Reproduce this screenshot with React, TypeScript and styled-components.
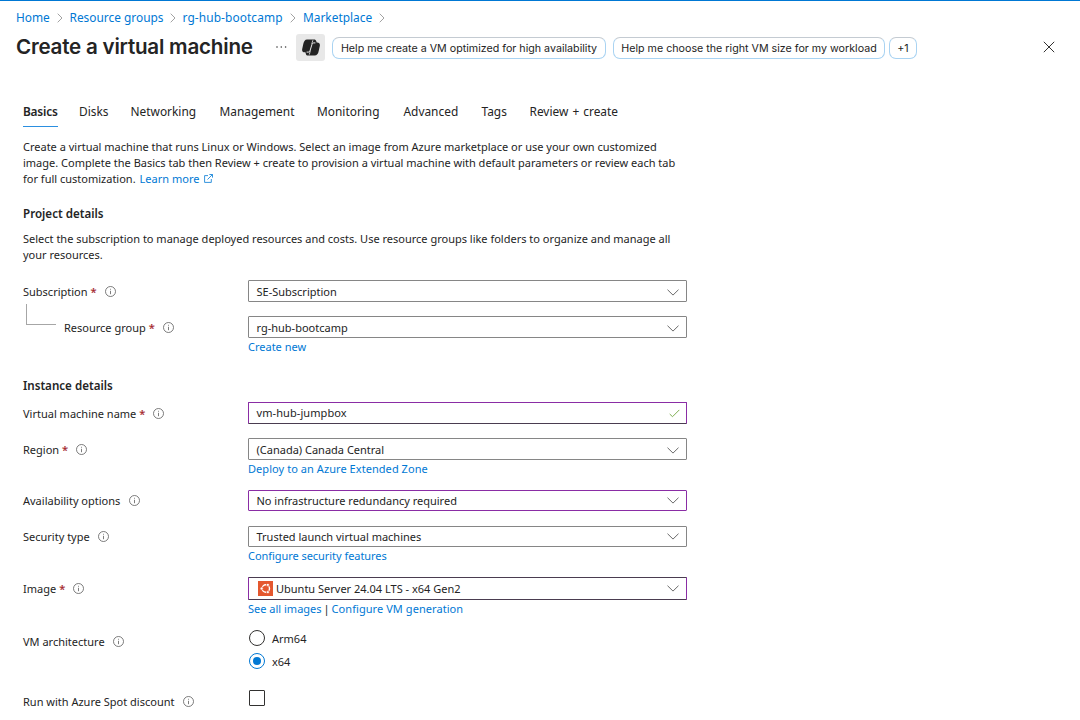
import React from "react";
import styled, { createGlobalStyle, css } from "styled-components";

const ink = "#242424";
const link = "#0078d4";
const purple = "#8a2da5";

const GlobalStyle = createGlobalStyle`
  * { box-sizing: border-box; }
  html, body { margin: 0; background: #fff; overflow: hidden; }
  body {
    font-family: "Noto Sans", "Open Sans", sans-serif;
    font-size: 11px;
    line-height: 16px;
    color: ${ink};
  }
`;

const Page = styled.div`
  width: 1080px;
  height: 720px;
  overflow: hidden;
  border-top: 1px solid ${link};
  background: #fff;
`;

const Link = styled.a<{ $spacing?: number }>`
  color: ${link};
  text-decoration: none;
  white-space: nowrap;
  letter-spacing: ${(p) => p.$spacing ?? 0}px;
`;

const Breadcrumbs = styled.nav`
  display: flex;
  align-items: center;
  height: 16px;
  margin: 9px 0 0 16px;
  font-size: 11.9px;
`;

const Crumb = styled.span<{ $width: number }>`
  display: flex;
  align-items: center;
  justify-content: space-between;
  width: ${(p) => p.$width}px;
  padding-right: 7px;
  a { padding-bottom: 2px; }
  svg { flex: none; }
`;

const Header = styled.header`
  display: flex;
  align-items: center;
  height: 34px;
  margin-top: 4px;
  padding: 0 25px 0 16px;
`;

const Title = styled.h1`
  width: 260px;
  margin: 0;
  font-family: Inter, sans-serif;
  font-size: 20.6px;
  font-weight: 600;
  line-height: 26px;
  letter-spacing: -0.22px;
  white-space: nowrap;
`;

const MoreButton = styled.span`
  display: flex;
  width: 20px;
`;

const CopilotButton = styled.span`
  display: flex;
  align-items: center;
  justify-content: center;
  width: 29px;
  height: 27px;
  border-radius: 3px;
  background: #e8e8e8;
`;

const Pill = styled.span<{ $width: number; $gap: number }>`
  display: flex;
  justify-content: center;
  width: ${(p) => p.$width}px;
  height: 22px;
  margin-left: ${(p) => p.$gap}px;
  margin-top: 2px;
  border: 1px solid #a9d3f2;
  border-top-color: #c4cbd2;
  border-radius: 7px;
  font-family: Inter, sans-serif;
  font-size: 10.7px;
  line-height: 22px;
  white-space: nowrap;
`;

const CloseButton = styled.span`
  display: flex;
  margin-left: auto;
`;

const Tabs = styled.nav`
  display: flex;
  margin: 39px 0 0 23px;
  font-size: 11.9px;
  line-height: 16px;
`;

const Tab = styled.span<{ $width: number; $active?: boolean }>`
  width: ${(p) => p.$width}px;
  height: 24px;
  white-space: nowrap;
  &:last-child { word-spacing: 1px; }
  span { display: inline-block; height: 24px; }
  ${(p) =>
    p.$active &&
    css`
      font-weight: 600;
      letter-spacing: -0.22px;
      span { border-bottom: 1px solid #2b8fe0; }
    `}
`;

const Body = styled.main`
  padding: 12px 0 0 23px;
`;

const Paragraph = styled.p`
  margin: 0;
  white-space: nowrap;
`;

const Line = styled.span`
  display: block;
`;

const LearnMore = styled(Link)`
  margin-left: 4px;
  svg { margin-left: 5px; }
`;

const SectionTitle = styled.h2<{ $top: number; $bottom: number }>`
  margin: ${(p) => p.$top}px 0 ${(p) => p.$bottom}px;
  font-size: 11.6px;
  font-weight: 600;
  line-height: 16px;
`;

const Row = styled.div<{ $height: number; $top?: number }>`
  display: flex;
  height: ${(p) => p.$height}px;
  margin-top: ${(p) => p.$top ?? 0}px;
`;

const LabelCell = styled.div<{ $top: number }>`
  display: flex;
  flex: none;
  align-items: flex-start;
  width: 225px;
  padding-top: ${(p) => p.$top}px;
  white-space: nowrap;
  svg { margin: 2px 0 0 8.5px; }
`;

const Required = styled.span`
  margin: 0 -0.5px 0 3px;
  color: #a4262c;
  -webkit-text-stroke: 0.2px #a4262c;
`;

const Branch = styled.span`
  flex: none;
  width: 30px;
  height: 21px;
  margin: -16px 8px 0 3px;
  border: solid #a6a6a6;
  border-width: 0 0 1px 1px;
`;

const FieldCell = styled.div`
  width: 439px;
`;

const Box = styled.div<{ $height?: number; $tone?: "purple" | "input" | "image" }>`
  display: flex;
  align-items: center;
  height: ${(p) => p.$height ?? 22}px;
  padding: ${(p) => (p.$height || p.$tone ? 0 : 2)}px 7px 0 7.5px;
  border: 1px solid ${(p) => (p.$tone ? purple : "#868686")};
  border-top-color: ${(p) => p.$tone === "image" && "#4a3c50"};
  border-bottom-color: ${(p) => (p.$tone === "image" || p.$tone === "input") && "#4a3c50"};
  border-radius: 1px;
  white-space: nowrap;
  ${(p) => p.$tone === "input" && "padding-right: 6px; letter-spacing: 0.08px;"}
  ${(p) => p.$tone === "image" && "padding-left: 9px;"}
  svg:last-child { margin-left: auto; }
`;

const ImageName = styled.span`
  margin-left: 3px;
`;

const Hint = styled.div`
  padding-top: 1px;
  white-space: nowrap;
`;

const Divider = styled.span`
  margin: 0 2px;
`;

const Option = styled.div<{ $height: number }>`
  display: flex;
  align-items: center;
  height: ${(p) => p.$height}px;
  padding-left: 1px;
`;

const OptionText = styled.span`
  padding: 2px 0 0 7px;
`;

const Radio = styled.span<{ $checked?: boolean }>`
  display: flex;
  align-items: center;
  justify-content: center;
  width: 16px;
  height: 16px;
  border: 1px solid ${(p) => (p.$checked ? link : "#323130")};
  border-radius: 50%;
  &::after {
    content: "";
    width: 8px;
    height: 8px;
    border-radius: 50%;
    background: ${(p) => (p.$checked ? link : "transparent")};
  }
`;

const Checkbox = styled.span`
  display: block;
  width: 16px;
  height: 16px;
  margin: 0 0 0 1px;
  border: 1px solid #323130;
  border-radius: 1px;
`;

const CrumbChevron = () => (
  <svg width="6" height="10" viewBox="0 0 6 10" fill="none" stroke="#8a8a8a" strokeWidth="0.8">
    <path d="M0.7 0.7 5 5 0.7 9.3" />
  </svg>
);

const DownChevron = () => (
  <svg width="12" height="7" viewBox="0 0 12 7" fill="none" stroke="#6a6a6a" strokeWidth="1">
    <path d="M0.5 0.7 6 6.1 11.5 0.7" />
  </svg>
);

const InfoIcon = () => (
  <svg width="11" height="11" viewBox="0 0 11 11" fill="none" stroke="#5c5c5c" strokeWidth="0.8">
    <circle cx="5.5" cy="5.5" r="5" />
    <path d="M5.5 4.8V8.2M5.5 2.8V3.7" />
  </svg>
);

const ExternalIcon = () => (
  <svg width="9" height="9" viewBox="0 0 9 9" fill="none" stroke={link} strokeWidth="0.8">
    <path d="M4 1.6H0.6V8.4H7.3V5M5.4 0.5H8.5V3.6M8.4 0.6 3.5 5.5" />
  </svg>
);

const CheckIcon = () => (
  <svg width="11" height="9" viewBox="0 0 11 9" fill="none" stroke="#7fae52" strokeWidth="1">
    <path d="M0.7 5 3.5 7.7 10.3 0.9" />
  </svg>
);

const CloseIcon = () => (
  <svg width="12" height="12" viewBox="0 0 12 12" fill="none" stroke="#323130" strokeWidth="1">
    <path d="M0.8 0.8 11.2 11.2M11.2 0.8 0.8 11.2" />
  </svg>
);

const DotsIcon = () => (
  <svg width="11" height="2" viewBox="0 0 11 2" fill="#3a3a3a">
    <circle cx="1" cy="1" r="0.8" />
    <circle cx="5.3" cy="1" r="0.8" />
    <circle cx="9.6" cy="1" r="0.8" />
  </svg>
);

const CopilotIcon = () => (
  <svg width="18" height="17" viewBox="0 0 18 17">
    <path
      fill="#242424"
      d="M5 0.4H12.2C13.3 0.4 13.9 1 14.2 2L14.7 3.5H15.3C17.3 3.5 18.2 5 17.8 7L16.7 12C16.1 14.8 15 16.5 12.6 16.5H5.9C4.8 16.5 4.2 15.9 3.9 14.9L3.4 13.3H2.7C0.7 13.3 -0.2 12 0.2 10L1.4 4.6C2 2 3 0.4 5 0.4Z"
    />
    <path
      fill="none"
      stroke="#e8e8e8"
      strokeWidth="1"
      d="M13.4 3.9H11.8C10.6 3.9 10.2 4.7 9.9 5.7L8.2 11.2C7.8 12.4 7.3 13.1 6.2 13.1H4.6"
    />
    <path fill="none" stroke="#e8e8e8" strokeWidth="0.8" d="M10.9 1.2 9.7 5.2M8.4 11.5 7.3 15.6" />
  </svg>
);

const UbuntuIcon = () => (
  <svg width="15" height="15" viewBox="0 0 15 15">
    <rect width="15" height="15" fill="#e4572e" />
    <circle cx="7.8" cy="7.5" r="3.7" fill="none" stroke="#fff" strokeWidth="1.4" />
    <g fill="#fff" stroke="#e4572e" strokeWidth="0.7">
      <circle cx="3.6" cy="7.5" r="1.5" />
      <circle cx="9.9" cy="3.9" r="1.5" />
      <circle cx="9.9" cy="11.1" r="1.5" />
    </g>
  </svg>
);

interface LabelProps {
  text: string;
  required?: boolean;
  top?: number;
  nested?: boolean;
}

const Label = ({ text, required, top = 4, nested }: LabelProps) => (
  <LabelCell $top={top}>
    {nested && <Branch />}
    <span>{text}</span>
    {required && <Required>*</Required>}
    <InfoIcon />
  </LabelCell>
);

const crumbs: [string, number][] = [
  ["Home", 53.5],
  ["Resource groups", 113],
  ["rg-hub-bootcamp", 120.5],
  ["Marketplace", 89],
];

const tabs: [string, number][] = [
  ["Basics", 56],
  ["Disks", 51.5],
  ["Networking", 89],
  ["Management", 97.5],
  ["Monitoring", 86.5],
  ["Advanced", 78],
  ["Tags", 48],
  ["Review + create", 100],
];

export default function App() {
  return (
    <Page>
      <GlobalStyle />
      <Breadcrumbs>
        {crumbs.map(([name, width]) => (
          <Crumb key={name} $width={width}>
            <Link $spacing={name.startsWith("rg") ? 0.1 : 0}>{name}</Link>
            <CrumbChevron />
          </Crumb>
        ))}
      </Breadcrumbs>
      <Header>
        <Title>Create a virtual machine</Title>
        <MoreButton><DotsIcon /></MoreButton>
        <CopilotButton><CopilotIcon /></CopilotButton>
        <Pill $width={274} $gap={7}>Help me create a VM optimized for high availability</Pill>
        <Pill $width={272} $gap={7}>Help me choose the right VM size for my workload</Pill>
        <Pill $width={28} $gap={4}>+1</Pill>
        <CloseButton><CloseIcon /></CloseButton>
      </Header>
      <Tabs>
        {tabs.map(([name, width], i) => (
          <Tab key={name} $width={width} $active={i === 0}><span>{name}</span></Tab>
        ))}
      </Tabs>
      <Body>
        <Paragraph>
          <Line>Create a virtual machine that runs Linux or Windows. Select an image from Azure marketplace or use your own customized</Line>
          <Line>image. Complete the Basics tab then Review + create to provision a virtual machine with default parameters or review each tab</Line>
          <Line>for full customization.<LearnMore>Learn more<ExternalIcon /></LearnMore></Line>
        </Paragraph>
        <SectionTitle $top={19} $bottom={9}>Project details</SectionTitle>
        <Paragraph>
          <Line>Select the subscription to manage deployed resources and costs. Use resource groups like folders to organize and manage all</Line>
          <Line>your resources.</Line>
        </Paragraph>
        <Row $height={36} $top={17}>
          <Label text="Subscription" required />
          <FieldCell><Box>SE-Subscription<DownChevron /></Box></FieldCell>
        </Row>
        <Row $height={62}>
          <Label text="Resource group" required nested />
          <FieldCell>
            <Box>rg-hub-bootcamp<DownChevron /></Box>
            <Hint><Link>Create new</Link></Hint>
          </FieldCell>
        </Row>
        <SectionTitle $top={0} $bottom={8}>Instance details</SectionTitle>
        <Row $height={36}>
          <Label text="Virtual machine name" required />
          <FieldCell><Box $tone="input">vm-hub-jumpbox<CheckIcon /></Box></FieldCell>
        </Row>
        <Row $height={52}>
          <Label text="Region" required />
          <FieldCell>
            <Box>(Canada) Canada Central<DownChevron /></Box>
            <Hint><Link $spacing={0.06}>Deploy to an Azure Extended Zone</Link></Hint>
          </FieldCell>
        </Row>
        <Row $height={36}>
          <Label text="Availability options" top={3} />
          <FieldCell><Box $height={21} $tone="purple">No infrastructure redundancy required<DownChevron /></Box></FieldCell>
        </Row>
        <Row $height={51}>
          <Label text="Security type" top={3} />
          <FieldCell>
            <Box $height={21}>Trusted launch virtual machines<DownChevron /></Box>
            <Hint><Link $spacing={-0.05}>Configure security features</Link></Hint>
          </FieldCell>
        </Row>
        <Row $height={52}>
          <Label text="Image" required />
          <FieldCell>
            <Box $height={23} $tone="image"><UbuntuIcon /><ImageName>Ubuntu Server 24.04 LTS - x64 Gen2</ImageName><DownChevron /></Box>
            <Hint><Link>See all images</Link><Divider>|</Divider><Link $spacing={0.06}>Configure VM generation</Link></Hint>
          </FieldCell>
        </Row>
        <Row $height={61}>
          <Label text="VM architecture" top={5} />
          <FieldCell>
            <Option $height={18}><Radio /><OptionText>Arm64</OptionText></Option>
            <Option $height={28}><Radio $checked /><OptionText>x64</OptionText></Option>
          </FieldCell>
        </Row>
        <Row $height={30}>
          <Label text="Run with Azure Spot discount" />
          <FieldCell><Checkbox /></FieldCell>
        </Row>
      </Body>
    </Page>
  );
}
